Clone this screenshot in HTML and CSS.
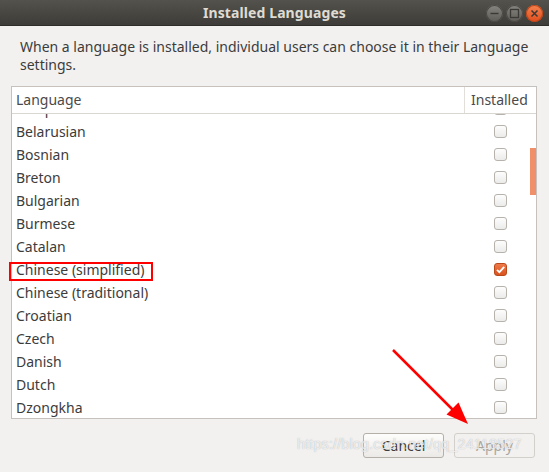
FILE: index.html
```html
<!DOCTYPE html>
<html>
<head>
<meta charset="utf-8">
<link rel="stylesheet" href="styles.css">
</head>
<body>
<div class="window">
  <div class="titlebar">
    <div class="tb-side"></div>
    <div class="title">Installed Languages</div>
    <div class="tb-side controls">
      <span class="wbtn gray"><svg width="17" height="17" viewBox="0 0 17 17"><line x1="4.5" y1="8.5" x2="12.5" y2="8.5" stroke="#3a3935" stroke-width="1.4"/></svg></span>
      <span class="wbtn gray"><svg width="17" height="17" viewBox="0 0 17 17"><rect x="4.5" y="4.5" width="8" height="8" fill="none" stroke="#3a3935" stroke-width="1.3"/></svg></span>
      <span class="wbtn close"><svg width="17" height="17" viewBox="0 0 17 17"><path d="M5.5 5.5 L11.5 11.5 M11.5 5.5 L5.5 11.5" stroke="#3a3935" stroke-width="1.5"/></svg></span>
    </div>
  </div>
  <div class="content">
    <p class="desc">When a language is installed, individual users can choose it in their Language settings.</p>
    <div class="table">
      <div class="thead">
        <div class="th th-lang">Language</div>
        <div class="th th-inst">Installed</div>
      </div>
      <div class="tbody">
        <div class="rows">
          <div class="row first"><span class="lang">Basque</span><span class="cb"></span></div>
          <div class="row"><span class="lang">Belarusian</span><span class="cb"></span></div>
          <div class="row"><span class="lang">Bosnian</span><span class="cb"></span></div>
          <div class="row"><span class="lang">Breton</span><span class="cb"></span></div>
          <div class="row"><span class="lang">Bulgarian</span><span class="cb"></span></div>
          <div class="row"><span class="lang">Burmese</span><span class="cb"></span></div>
          <div class="row"><span class="lang">Catalan</span><span class="cb"></span></div>
          <div class="row"><span class="lang">Chinese (simplified)</span><span class="cb checked"><svg width="13" height="13" viewBox="0 0 13 13"><path d="M3 6.8 L5.4 9.2 L10.2 3.8" fill="none" stroke="#fff" stroke-width="1.8"/></svg></span></div>
          <div class="row"><span class="lang">Chinese (traditional)</span><span class="cb"></span></div>
          <div class="row"><span class="lang">Croatian</span><span class="cb"></span></div>
          <div class="row"><span class="lang">Czech</span><span class="cb"></span></div>
          <div class="row"><span class="lang">Danish</span><span class="cb"></span></div>
          <div class="row"><span class="lang">Dutch</span><span class="cb"></span></div>
          <div class="row"><span class="lang">Dzongkha</span><span class="cb"></span></div>
          <div class="row"><span class="lang">English</span><span class="cb"></span></div>
        </div>
        <div class="scrollbar"></div>
      </div>
    </div>
    <div class="buttons">
      <button class="btn">Cancel</button>
      <button class="btn disabled">Apply</button>
    </div>
  </div>
  <div class="mark"></div>
  <div class="watermark">https://blog.csdn.net/qq_24118527</div>
  <svg class="arrow" width="549" height="472" viewBox="0 0 549 472">
    <line x1="393" y1="350" x2="455" y2="412" stroke="#f00" stroke-width="2.5"/>
    <polygon points="468,424 458.5,402.5 446.5,414.5" fill="#f00"/>
  </svg>
</div>
</body>
</html>
```

FILE: styles.css
```css
html, body {
  margin: 0;
  padding: 0;
}
body {
  background: #f2f1f0;
  font-family: "Noto Sans", "DejaVu Sans", sans-serif;
  font-size: 14px;
  color: #3c3c3c;
}
.window {
  position: relative;
  width: 549px;
  height: 472px;
  display: flex;
  flex-direction: column;
  background: #f2f1f0;
  overflow: hidden;
}
.titlebar {
  height: 26px;
  flex: none;
  display: grid;
  grid-template-columns: 1fr auto 1fr;
  align-items: center;
  background: linear-gradient(#54524c, #3d3c38);
  border-bottom: 1px solid #2e2d29;
  box-sizing: border-box;
}
.title {
  font-weight: bold;
  font-size: 14px;
  color: #dfdbd2;
  line-height: 26px;
  letter-spacing: 0.1px;
}
.controls {
  display: flex;
  justify-content: flex-end;
  gap: 3px;
  padding-right: 6px;
}
.wbtn {
  width: 17px;
  height: 17px;
  border-radius: 50%;
  display: flex;
  box-sizing: border-box;
}
.wbtn.gray {
  background: linear-gradient(#87857f, #5d5b56);
  box-shadow: inset 0 0 0 1px #4a4844;
}
.wbtn.close {
  background: linear-gradient(#f5834f, #df4d1c);
  box-shadow: inset 0 0 0 1px #b8461c;
}
.content {
  flex: 1;
  display: flex;
  flex-direction: column;
  padding: 12px 12px 14px 11px;
}
.desc {
  margin: 0 8px 12px 9px;
  line-height: 18px;
  height: 36px;
}
.table {
  height: 333px;
  box-sizing: border-box;
  border: 1px solid #c6c1bc;
  background: #fff;
  display: flex;
  flex-direction: column;
}
.thead {
  height: 27px;
  flex: none;
  box-sizing: border-box;
  border-bottom: 1px solid #dad6d2;
  display: flex;
}
.th {
  line-height: 26px;
  color: #4a4a4a;
}
.th-lang {
  flex: 1;
  padding-left: 4px;
  border-right: 1px solid #e2deda;
}
.th-inst {
  width: 71px;
  padding-left: 6px;
  box-sizing: border-box;
}
.tbody {
  position: relative;
  flex: 1;
  overflow: hidden;
}
.row {
  height: 23px;
  display: flex;
  align-items: center;
}
.row.first {
  margin-top: -17px;
}
.lang {
  flex: 1;
  padding-left: 4px;
  line-height: 23px;
}
.cb {
  width: 13px;
  height: 13px;
  box-sizing: border-box;
  border: 1px solid #b7b2ac;
  border-radius: 3px;
  background: linear-gradient(#fdfdfd, #ebebea);
  margin-right: 29px;
  display: flex;
}
.cb.checked {
  border-color: #b9481b;
  background: linear-gradient(#ef7a4a, #d9531f);
}
.cb.checked svg {
  margin: -1px;
}
.scrollbar {
  position: absolute;
  right: 0;
  top: 34px;
  width: 6px;
  height: 47px;
  background: #f0906a;
}
.mark {
  position: absolute;
  left: 9px;
  top: 262px;
  width: 140px;
  height: 15px;
  border: 2px solid #f00;
}
.buttons {
  margin-top: 14px;
  display: flex;
  justify-content: flex-end;
  gap: 10px;
  padding-right: 2px;
}
.btn {
  width: 81px;
  height: 25px;
  box-sizing: border-box;
  font-family: "Noto Sans", "DejaVu Sans", sans-serif;
  font-size: 14px;
  color: #3c3c3c;
  border: 1px solid #b4afa9;
  border-radius: 3px;
  background: linear-gradient(#fdfdfc, #eceae7);
  padding: 0;
  line-height: 22px;
}
.btn.disabled {
  color: #aaa6a0;
  border-color: #d3cfca;
  background: #f2f1f0;
}
.watermark {
  position: absolute;
  left: 297px;
  top: 436px;
  font-family: "Liberation Sans", Arial, sans-serif;
  font-size: 14.5px;
  color: rgba(255, 255, 255, 0.75);
  text-shadow: 0 0 1px rgba(120, 120, 120, 0.6);
  letter-spacing: 0.1px;
}
.arrow {
  position: absolute;
  left: 0;
  top: 0;
  pointer-events: none;
}
```
